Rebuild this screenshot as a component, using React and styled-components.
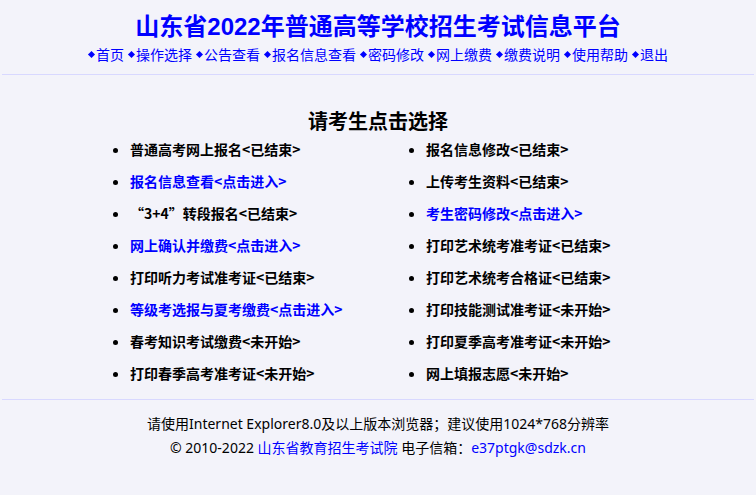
import React from "react";
import styled, { createGlobalStyle } from "styled-components";

const Global = createGlobalStyle`
  html, body { margin: 0; padding: 0; background: #f3f3fa; }
  body { font-family: "Noto Sans", "Noto Sans CJK SC", sans-serif; color: #000; }
`;

const Page = styled.div`
  width: 756px;
  min-height: 495px;
  background: #f3f3fa;
`;

const Header = styled.header`
  display: flex;
  flex-direction: column;
  align-items: center;
  padding-top: 13px;
`;

const Title = styled.h1`
  margin: 0;
  font-family: "Liberation Sans", "Noto Sans CJK SC", sans-serif;
  font-size: 24px;
  line-height: 28px;
  font-weight: 700;
  color: #0000ff;
`;

const Nav = styled.nav`
  display: flex;
  gap: 4px;
  margin-top: 3px;
  font-size: 14px;
  line-height: 20px;
  font-family: "Noto Sans CJK SC", sans-serif;
`;

const NavLink = styled.a`
  display: flex;
  align-items: center;
  color: #0000ff;
  text-decoration: none;
  &::before {
    content: "";
    width: 5px;
    height: 5px;
    background: #0000ff;
    transform: rotate(45deg);
    margin: 0 2px 0 1px;
  }
`;

const Rule = styled.div`
  height: 1px;
  background: #d8d8ff;
  margin: ${(p) => p.$top}px 2px 0;
`;

const Main = styled.main`
  display: flex;
  flex-direction: column;
  align-items: center;
`;

const Heading = styled.h2`
  margin: 34px 0 0;
  font-size: 20px;
  line-height: 24px;
  font-weight: 700;
  font-family: "Noto Sans CJK SC", sans-serif;
`;

const Columns = styled.div`
  display: grid;
  grid-template-columns: 296px 296px;
`;

const List = styled.ul`
  margin: 0;
  padding: 0 0 0 48px;
`;

const Item = styled.li`
  font-size: 14px;
  line-height: 32px;
  font-weight: 700;
  font-family: "Noto Sans CJK SC", sans-serif;
  color: ${(p) => (p.$link ? "#0000ff" : "#000")};
  cursor: ${(p) => (p.$link ? "pointer" : "default")};
  &::marker { color: #000; }
`;

const Footer = styled.footer`
  display: flex;
  flex-direction: column;
  align-items: center;
  padding-top: 12px;
  font-size: 14px;
  line-height: 24px;
  font-family: "Noto Sans", "Noto Sans CJK SC", sans-serif;
`;

const FooterLink = styled.a`
  color: #0000ff;
  text-decoration: none;
`;

const navItems = ["首页", "操作选择", "公告查看", "报名信息查看", "密码修改", "网上缴费", "缴费说明", "使用帮助", "退出"];

const left = [
  ["普通高考网上报名<已结束>", false],
  ["报名信息查看<点击进入>", true],
  ["“3+4”转段报名<已结束>", false],
  ["网上确认并缴费<点击进入>", true],
  ["打印听力考试准考证<已结束>", false],
  ["等级考选报与夏考缴费<点击进入>", true],
  ["春考知识考试缴费<未开始>", false],
  ["打印春季高考准考证<未开始>", false],
];

const right = [
  ["报名信息修改<已结束>", false],
  ["上传考生资料<已结束>", false],
  ["考生密码修改<点击进入>", true],
  ["打印艺术统考准考证<已结束>", false],
  ["打印艺术统考合格证<已结束>", false],
  ["打印技能测试准考证<未开始>", false],
  ["打印夏季高考准考证<未开始>", false],
  ["网上填报志愿<未开始>", false],
];

export default function App() {
  return (
    <Page>
      <Global />
      <Header>
        <Title>山东省2022年普通高等学校招生考试信息平台</Title>
        <Nav>
          {navItems.map((n) => (
            <NavLink key={n} href="#">{n}</NavLink>
          ))}
        </Nav>
      </Header>
      <Rule $top={10} />
      <Main>
        <Heading>请考生点击选择</Heading>
        <Columns>
          {[left, right].map((col, i) => (
            <List key={i}>
              {col.map(([t, link]) => (
                <Item key={t} $link={link}>{t}</Item>
              ))}
            </List>
          ))}
        </Columns>
      </Main>
      <Rule $top={10} />
      <Footer>
        <div>请使用Internet Explorer8.0及以上版本浏览器；建议使用1024*768分辨率</div>
        <div>
          © 2010-2022 <FooterLink href="#">山东省教育招生考试院</FooterLink> 电子信箱：<FooterLink href="#">e37ptgk@sdzk.cn</FooterLink>
        </div>
      </Footer>
    </Page>
  );
}
